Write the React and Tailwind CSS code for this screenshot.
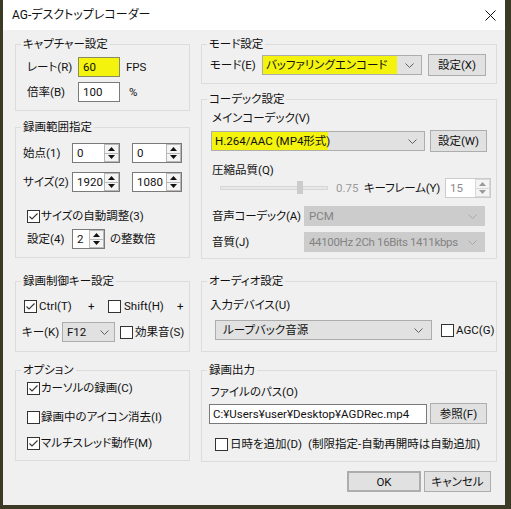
import React from 'react';

const YELLOW = 'bg-[#f3f30d]';

function Check({ checked }) {
  return (
    <span className="w-[13px] h-[13px] border border-[#333333] bg-white flex items-center justify-center shrink-0">
      {checked && (
        <svg width="11" height="11" viewBox="0 0 11 11">
          <path d="M1.5 5.5 L4 8 L9.5 2.5" fill="none" stroke="#333333" strokeWidth="1.1" />
        </svg>
      )}
    </span>
  );
}

function Chevron({ color = '#606060' }) {
  return (
    <svg width="9" height="5" viewBox="0 0 9 5">
      <path d="M0.5 0.5 L4.5 4.5 L8.5 0.5" fill="none" stroke={color} />
    </svg>
  );
}

function Arrow({ up, color = '#111111' }) {
  return (
    <svg width="7" height="4" viewBox="0 0 7 4">
      <path d={up ? 'M0 4 L3.5 0 L7 4 Z' : 'M0 0 L3.5 4 L7 0 Z'} fill={color} />
    </svg>
  );
}

function Spin({ value, className = '', disabled }) {
  return (
    <div
      className={`flex h-[20px] border bg-white shrink-0 ${disabled ? 'border-[#cccccc] text-[#8a8a8a]' : 'border-[#7a7a7a]'} ${className}`}
    >
      <span className="flex-1 pl-[4px] leading-[18px]">{value}</span>
      <div className="w-[15px] flex flex-col">
        <span className={`flex-1 flex items-center justify-center border ${disabled ? 'border-[#d9d9d9]' : 'border-[#b8b8b8]'} bg-[#f4f4f4]`}>
          <Arrow up color={disabled ? '#9a9a9a' : '#111111'} />
        </span>
        <span className={`flex-1 flex items-center justify-center border border-t-0 ${disabled ? 'border-[#d9d9d9]' : 'border-[#b8b8b8]'} bg-[#f4f4f4]`}>
          <Arrow color={disabled ? '#9a9a9a' : '#111111'} />
        </span>
      </div>
    </div>
  );
}

function Group({ title, className = '', children }) {
  return (
    <fieldset className={`border border-[#dcdcdc] ${className}`}>
      <legend className="ml-[5px] px-[2px] leading-[16px]">{title}</legend>
      {children}
    </fieldset>
  );
}

function Button({ children, className = '' }) {
  return (
    <button className={`bg-[#e1e1e1] border border-[#adadad] flex items-center justify-center shrink-0 ${className}`}>
      {children}
    </button>
  );
}

export default function App() {
  return (
    <div className="w-[511px] h-[509px] bg-[#3a3a26] overflow-hidden font-['Roboto','Noto_Sans_CJK_JP',sans-serif] [font-feature-settings:'palt'] text-[11.5px] leading-[16px] whitespace-nowrap text-[#111111]">
      <div className="ml-[3px] w-[502px] h-[505px] bg-[#f0f0f0] flex flex-col">
        {/* title bar */}
        <div className="h-[30px] bg-white flex items-center justify-between pl-[9px] pr-[9px] shrink-0">
          <span className="text-[12px]">AG-デスクトップレコーダー</span>
          <svg width="11" height="11" viewBox="0 0 11 11">
            <path d="M0.5 0.5 L10.5 10.5 M10.5 0.5 L0.5 10.5" stroke="#111111" strokeWidth="1" />
          </svg>
        </div>

        <div className="flex pl-[12px] pt-[6px] gap-[11px]">
          {/* left column */}
          <div className="w-[175px] flex flex-col">
            <Group title="キャプチャー設定" className="h-[75px]">
              <div className="pt-[5px] pl-[11px] flex flex-col gap-[5px]">
                <div className="flex items-center h-[20px]">
                  <span className="w-[51px]">レート(R)</span>
                  <span className={`w-[42px] h-[20px] border border-[#8a8a60] ${YELLOW} pl-[4px] leading-[18px]`}>60</span>
                  <span className="ml-[6px]">FPS</span>
                </div>
                <div className="flex items-center h-[20px]">
                  <span className="w-[51px]">倍率(B)</span>
                  <span className="w-[42px] h-[20px] border border-[#7a7a7a] bg-white pl-[4px] leading-[18px]">100</span>
                  <span className="ml-[9px]">%</span>
                </div>
              </div>
            </Group>

            <Group title="録画範囲指定" className="h-[139px] mt-[8px]">
              <div className="pt-[8px] pl-[7px] flex flex-col">
                <div className="flex items-center h-[20px]">
                  <span className="w-[49px]">始点(1)</span>
                  <Spin value="0" className="w-[48px]" />
                  <Spin value="0" className="w-[50px] ml-[12px]" />
                </div>
                <div className="flex items-center h-[20px] mt-[9px]">
                  <span className="w-[49px]">サイズ(2)</span>
                  <Spin value="1920" className="w-[48px]" />
                  <Spin value="1080" className="w-[50px] ml-[12px]" />
                </div>
                <div className="flex items-center h-[14px] mt-[17px] ml-[4px]">
                  <Check checked />
                  <span className="ml-[1px]">サイズの自動調整(3)</span>
                </div>
                <div className="flex items-center h-[20px] mt-[6px] ml-[4px]">
                  <span className="w-[45px]">設定(4)</span>
                  <Spin value="2" className="w-[33px]" />
                  <span className="ml-[5px]">の整数倍</span>
                </div>
              </div>
            </Group>

            <Group title="録画制御キー設定" className="h-[79px] mt-[15px]">
              <div className="pt-[10px] pl-[6px] flex flex-col">
                <div className="flex items-center h-[14px] ml-[2px]">
                  <Check checked />
                  <span className="ml-[2px] w-[49px]">Ctrl(T)</span>
                  <span className="w-[20px]">+</span>
                  <Check />
                  <span className="ml-[3px] w-[53px]">Shift(H)</span>
                  <span>+</span>
                </div>
                <div className="flex items-center h-[20px] mt-[9px]">
                  <span className="w-[40px]">キー(K)</span>
                  <div className="w-[53px] h-[20px] bg-[#e1e1e1] border border-[#adadad] flex items-center justify-between pl-[4px] pr-[5px]">
                    <span>F12</span>
                    <Chevron />
                  </div>
                  <span className="ml-[5px]"><Check /></span>
                  <span className="ml-[2px]">効果音(S)</span>
                </div>
              </div>
            </Group>

            <Group title="オプション" className="h-[99px] mt-[10px]">
              <div className="pt-[3px] pl-[11px] flex flex-col">
                <div className="flex items-center h-[14px]">
                  <Check checked />
                  <span className="ml-[1px]">カーソルの録画(C)</span>
                </div>
                <div className="flex items-center h-[14px] mt-[15px]">
                  <Check />
                  <span className="ml-[1px]">録画中のアイコン消去(I)</span>
                </div>
                <div className="flex items-center h-[14px] mt-[12px]">
                  <Check checked />
                  <span className="ml-[1px]">マルチスレッド動作(M)</span>
                </div>
              </div>
            </Group>
          </div>

          {/* right column */}
          <div className="w-[296px] flex flex-col">
            <Group title="モード設定" className="h-[48px]">
              <div className="pt-[2px] pl-[8px] flex items-center h-[24px]">
                <span className="w-[52px]">モード(E)</span>
                <div className="w-[160px] h-[20px] bg-[#e1e1e1] border border-[#adadad] flex items-center">
                  <span className={`flex-1 h-full ${YELLOW} pl-[3px] leading-[18px]`}>バッファリングエンコード</span>
                  <span className="w-[24px] flex items-center justify-center"><Chevron /></span>
                </div>
                <Button className="ml-[6px] w-[58px] h-[22px]">設定(X)</Button>
              </div>
            </Group>

            <Group title="コーデック設定" className="h-[168px] mt-[7px]">
              <div className="pt-[3px] pl-[9px] flex flex-col">
                <span className="ml-[1px] leading-[16px]">メインコーデック(V)</span>
                <div className="flex items-center mt-[4px] h-[22px]">
                  <div className="w-[214px] h-[20px] bg-[#e1e1e1] border border-[#adadad] flex items-center">
                    <span className={`w-[116px] h-full ${YELLOW} pl-[3px] leading-[18px]`}>H.264/AAC (MP4形式)</span>
                    <span className="flex-1" />
                    <span className="w-[24px] flex items-center justify-center"><Chevron /></span>
                  </div>
                  <Button className="ml-[5px] w-[57px] h-[22px]">設定(W)</Button>
                </div>
                <span className="ml-[1px] mt-[10px] leading-[16px]">圧縮品質(Q)</span>
                <div className="flex items-center h-[20px]">
                  <div className="relative ml-[9px] w-[108px] h-[4px] bg-[#e7e7e7] border border-[#d6d6d6] shrink-0">
                    <span className="absolute left-[76px] top-[-6px] w-[6px] h-[13px] bg-[#cccccc]" />
                  </div>
                  <span className="ml-[8px] w-[28px] text-[#9a9a9a]">0.75</span>
                  <span className="w-[81px] tracking-[-0.2px]">キーフレーム(Y)</span>
                  <Spin value="15" disabled className="w-[46px]" />
                </div>
                <div className="flex items-center h-[20px] mt-[8px]">
                  <span className="w-[92px] ml-[1px] tracking-[-0.2px]">音声コーデック(A)</span>
                  <div className="w-[181px] h-[20px] bg-[#cccccc] border border-[#cccccc] flex items-center justify-between pl-[4px] pr-[7px] text-[#838383]">
                    <span>PCM</span>
                    <Chevron color="#a8a8a8" />
                  </div>
                </div>
                <div className="flex items-center h-[20px] mt-[6px]">
                  <span className="w-[92px] ml-[1px]">音質(J)</span>
                  <div className="w-[181px] h-[20px] bg-[#cccccc] border border-[#cccccc] flex items-center justify-between pl-[4px] pr-[7px] text-[#838383]">
                    <span className="tracking-[-0.35px]">44100Hz 2Ch 16Bits 1411kbps</span>
                    <Chevron color="#a8a8a8" />
                  </div>
                </div>
              </div>
            </Group>

            <Group title="オーディオ設定" className="h-[79px] mt-[14px]">
              <div className="pt-[8px] pl-[8px] flex flex-col">
                <span className="leading-[16px]">入力デバイス(U)</span>
                <div className="flex items-center h-[20px] mt-[7px]">
                  <div className="ml-[5px] w-[217px] h-[20px] bg-[#e1e1e1] border border-[#adadad] flex items-center justify-between pl-[7px] pr-[8px]">
                    <span>ループバック音源</span>
                    <Chevron />
                  </div>
                  <span className="ml-[9px]"><Check /></span>
                  <span className="ml-[2px]">AGC(G)</span>
                </div>
              </div>
            </Group>

            <Group title="録画出力" className="h-[100px] mt-[10px]">
              <div className="pt-[6px] pl-[7px] flex flex-col">
                <span className="ml-[1px] leading-[16px]">ファイルのパス(O)</span>
                <div className="flex items-center h-[21px] mt-[3px]">
                  <span className="w-[218px] h-[20px] border border-[#7a7a7a] bg-white pl-[3px] leading-[18px]">
                    C:¥Users¥user¥Desktop¥AGDRec.mp4
                  </span>
                  <Button className="ml-[3px] w-[57px] h-[21px]">参照(F)</Button>
                </div>
                <div className="flex items-center h-[14px] mt-[13px] ml-[6px]">
                  <Check />
                  <span className="ml-[2px]">日時を追加(D)</span>
                  <span className="ml-[6px]">(制限指定-自動再開時は自動追加)</span>
                </div>
              </div>
            </Group>

            <div className="flex justify-end gap-[3px] pr-[6px] mt-[9px]">
              <Button className="w-[74px] h-[21px] border-2 border-[#0078d7]">OK</Button>
              <Button className="w-[67px] h-[21px]">キャンセル</Button>
            </div>
          </div>
        </div>
      </div>
    </div>
  );
}
